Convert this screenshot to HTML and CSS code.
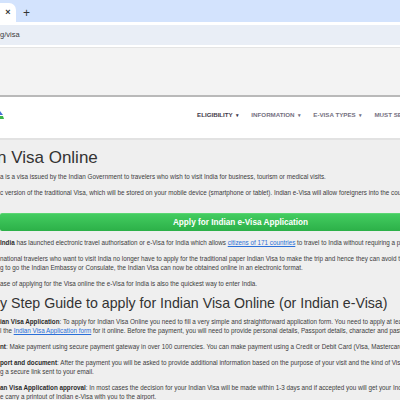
FILE: index.html
```html
<!DOCTYPE html>
<html lang="en">
<head>
  <meta charset="UTF-8">
  <meta name="viewport" content="width=device-width, initial-scale=1.0">
  <title>Indian Visa Online</title>
  <link rel="stylesheet" href="styles.css">
</head>
<body>
  <div class="chrome">
    <div class="tab-strip">
      <div class="tab"><span class="tab-close">&times;</span></div>
      <span class="new-tab">+</span>
    </div>
    <div class="toolbar">
      <div class="omnibox">g/visa</div>
    </div>
  </div>

  <div class="site">
    <div class="topbar"></div>
    <nav class="menu">
      <svg class="logo" width="4" height="9" viewBox="0 0 4 9">
        <path d="M0 0 L3 4 L0 4 Z" fill="#4a6fd6"/>
        <path d="M0 5 L3 5 L4 8 L0 8 Z" fill="#3bb54a"/>
      </svg>
      <ul class="menu-links">
        <li class="active">ELIGIBILITY <span class="caret">&#9662;</span></li>
        <li>INFORMATION <span class="caret">&#9662;</span></li>
        <li>E-VISA TYPES <span class="caret">&#9662;</span></li>
        <li>MUST SEE</li>
      </ul>
    </nav>

    <main class="content">
      <h1 class="title">n Visa Online</h1>
      <p>a is a visa issued by the Indian Government to travelers who wish to visit India for business, tourism or medical visits.</p>
      <p>c version of the traditional Visa, which will be stored on your mobile device (smartphone or tablet). Indian e-Visa will allow foreigners into the country.</p>

      <div class="apply-btn">Apply for Indian e-Visa Application</div>

      <p><b>India</b> has launched electronic travel authorisation or e-Visa for India which allows <a href="#">citizens of 171 countries</a> to travel to India without requiring a physical stamp.</p>
      <p>national travelers who want to visit India no longer have to apply for the traditional paper Indian Visa to make the trip and hence they can avoid the<br>g to go the Indian Embassy or Consulate, the Indian Visa can now be obtained online in an electronic format.</p>
      <p>ase of applying for the Visa online the e-Visa for India is also the quickest way to enter India.</p>

      <h2 class="subtitle">y Step Guide to apply for Indian Visa Online (or Indian e-Visa)</h2>
      <p><b>ian Visa Application</b>: To apply for Indian Visa Online you need to fill a very simple and straightforward application form. You need to apply at least<br>l the <a href="#">Indian Visa Application form</a> for it online. Before the payment, you will need to provide personal details, Passport details, character and past</p>
      <p><b>nt</b>: Make payment using secure payment gateway in over 100 currencies. You can make payment using a Credit or Debit Card (Visa, Mastercard</p>
      <p><b>port and document</b>: After the payment you will be asked to provide additional information based on the purpose of your visit and the kind of Visa<br>g a secure link sent to your email.</p>
      <p><b>an Visa Application approval</b>: In most cases the decision for your Indian Visa will be made within 1-3 days and if accepted you will get your Indian<br>e carry a printout of Indian e-Visa with you to the airport.</p>
    </main>
  </div>
</body>
</html>
```

FILE: styles.css
```css
html, body {
  margin: 0;
  height: 100%;
  overflow: hidden;
}

body {
  font-family: "Liberation Sans", Arial, sans-serif;
  background: #efefef;
  color: #3c3c3c;
}

/* browser chrome */
.tab-strip {
  height: 22px;
  background: #d3e3fd;
  display: flex;
  align-items: flex-end;
}

.tab {
  width: 16px;
  height: 19px;
  background: #fff;
  border-top-right-radius: 7px;
  display: flex;
  align-items: center;
  justify-content: center;
}

.tab-close {
  font-size: 9px;
  font-weight: bold;
  color: #333;
  line-height: 1;
}

.new-tab {
  margin-left: 7px;
  height: 19px;
  display: flex;
  align-items: center;
  font-size: 12px;
  color: #333;
}

.toolbar {
  background: #fff;
  padding: 3px 0 2px;
  border-bottom: 1px solid #e4e4e4;
}

.omnibox {
  height: 20px;
  line-height: 20px;
  background: #e9eef6;
  font-size: 7.5px;
  color: #3c3c3c;
}

/* page */
.site {
  width: 481px;
}

.topbar {
  height: 47px;
  background: #f3f3f3;
  border-bottom: 2px solid #b9b9b9;
}

.menu {
  height: 41px;
  background: #fff;
  border-bottom: 2px solid #e2e2e2;
  display: flex;
  align-items: center;
}

.logo {
  margin-top: -4px;
  flex-shrink: 0;
}

.menu-links {
  list-style: none;
  margin: -6px 0 0 193px;
  padding: 0;
  display: flex;
  gap: 12px;
  white-space: nowrap;
}

.menu-links li {
  font-size: 6.2px;
  font-weight: bold;
  color: #75717f;
}

.menu-links li.active {
  color: #3f3a4a;
}

.caret {
  font-size: 5px;
  margin-left: 2px;
}

.content {
  padding-top: 8px;
}

.title {
  margin: 0 0 4px -3px;
  font-size: 17px;
  line-height: 20px;
  font-weight: normal;
  color: #333;
}

.subtitle {
  margin: 1px 0 5px;
  font-size: 14.2px;
  line-height: 17px;
  font-weight: normal;
  color: #333;
  white-space: nowrap;
}

.content p {
  margin: 0 0 7px;
  font-size: 6.3px;
  line-height: 9px;
  white-space: nowrap;
}

.content b {
  color: #2a2a2a;
}

.content a {
  color: #2a6fd8;
}

.apply-btn {
  margin: 16px 0 7px;
  height: 18px;
  line-height: 18px;
  text-align: center;
  font-size: 8.2px;
  font-weight: bold;
  color: #fff;
  background: linear-gradient(#43cc60, #2cb048);
  border-top: 1px solid #5bd673;
  border-radius: 2px;
  box-sizing: border-box;
}
```
